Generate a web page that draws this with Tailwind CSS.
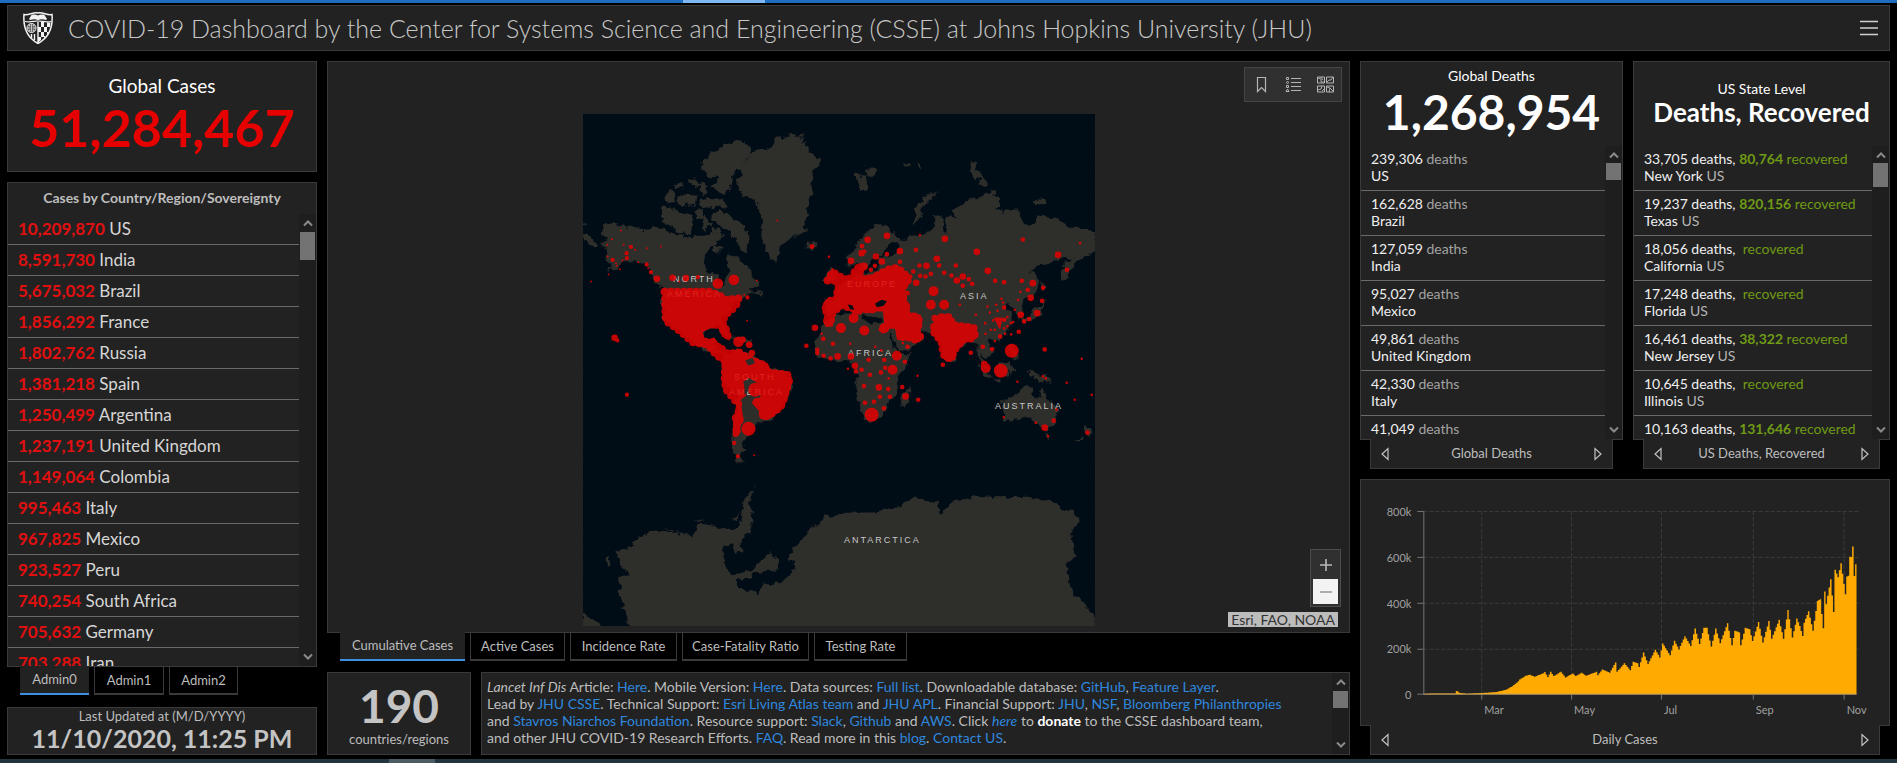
<!DOCTYPE html>
<html lang="en">
<head>
<meta charset="utf-8">
<title>COVID-19 Dashboard</title>
<script src="https://cdn.jsdelivr.net/npm/@tailwindcss/browser@4"></script>
</head>
<body class="flex h-screen min-h-[700px] flex-col overflow-hidden bg-black font-['Lato',sans-serif] text-sm leading-[17px] text-[#bdbdbd]">
<svg class="hidden">
  <symbol id="up" viewBox="0 0 10 8"><path d="M1 6.500 5 2.500l4 4" fill="none" stroke="#8a8a8a" stroke-width="2"/></symbol>
  <symbol id="down" viewBox="0 0 10 8"><path d="M1 1.500l4 4 4-4" fill="none" stroke="#8a8a8a" stroke-width="2"/></symbol>
  <symbol id="prev" viewBox="0 0 8 14"><path d="M7 1.500v11L1 7z" fill="none" stroke="#c4c4c4" stroke-width="1.200"/></symbol>
  <symbol id="next" viewBox="0 0 8 14"><path d="M1 1.500v11L7 7z" fill="none" stroke="#c4c4c4" stroke-width="1.200"/></symbol>
</svg>

<div class="flex h-[3px] shrink-0 bg-[#1f6dbd]"><div class="ml-[36%] w-[82px] bg-[#7db8f5]"></div></div>

<header class="mx-[7px] mt-0.5 flex h-[46px] shrink-0 items-center border border-[#3a3a3a] bg-[#222] px-[15px]">
  <svg class="h-8 w-[30px]" viewBox="0 0 30 32" aria-label="Johns Hopkins University">
    <path d="M1 2.500C6 3.500 10 0 15 1c5-1 9 2.500 14 1.500C30 15 27 25 15 31.500 3 25 0 15 1 2.500z" fill="#222" stroke="#f2f2f2" stroke-width="1.500"/>
    <path d="M6 7l2.500-4c2.500-.6 4.500-.6 6.500.6 2-1.200 4-1.200 6.500-.6L24 7l-1 1c-3-1-6-1-8 .3C13 7 10 7 7 8z" fill="#f2f2f2"/>
    <path d="M2 9.500c5 1 9-.5 13-.5s8 1.500 13 .5" fill="none" stroke="#f2f2f2" stroke-width="1.200"/>
    <circle cx="8.500" cy="16" r="4.500" fill="none" stroke="#f2f2f2"/>
    <path d="M4 16h9M8.500 11.500v9M5.500 13c2 1.500 4 1.500 6 0M5.500 19c2-1.500 4-1.500 6 0M7 12c-1.500 2-1.500 6 0 8M10 12c1.500 2 1.500 6 0 8" fill="none" stroke="#f2f2f2" stroke-width=".7"/>
    <path d="M15 10v21M11.500 22v6M8.500 22v4" stroke="#f2f2f2" stroke-width="1.400"/>
    <path d="M18 10h3v5h-3zM24 10.500h3.500L27 15h-3zM21 15h3v5h-3zM18 20h3v5h-3zM15 15h3v5h-3zM24 20h2l-2 4zM21 24h1.500L21 27zM15 25h3v3l-3 2.500z" fill="#f2f2f2"/>
  </svg>
  <h1 class="ml-[15px] text-[25px] leading-[30px] font-light whitespace-nowrap text-[#c8c8c8]">COVID-19 Dashboard by the Center for Systems Science and Engineering (CSSE) at Johns Hopkins University (JHU)</h1>
  <button class="ml-auto" aria-label="Menu"><svg class="mr-[-4px] h-4 w-[18px]" viewBox="0 0 18 16"><path d="M0 1.500h18M0 8h18M0 14.500h18" stroke="#d0d0d0" stroke-width="1.600"/></svg></button>
</header>

<main class="mx-[7px] mt-[10px] grid min-h-0 flex-1 grid-cols-[310fr_1023fr_530fr] gap-[10px]">
  <!-- Country totals -->
  <section class="flex min-h-0 min-w-0 flex-col">
    <div class="flex h-[111px] shrink-0 flex-col items-center border border-[#3a3a3a] bg-[#222] pt-3">
      <h2 class="text-[19px] leading-6 text-white">Global Cases</h2>
      <p class="text-[52px] leading-[58px] font-bold text-[#e60000]">51,284,467</p>
    </div>
    <div class="mt-[10px] flex min-h-0 flex-1 flex-col border border-[#3a3a3a] bg-[#222]">
      <h2 class="h-[31px] shrink-0 text-center text-[14px] leading-[30px] font-bold">Cases by Country/Region/Sovereignty</h2>
      <div class="flex min-h-0 flex-1">
        <ul class="min-w-0 flex-1 overflow-hidden text-[17px] leading-[30px] text-[#d6d6d6] [&>li]:border-b [&>li]:border-[#6a6a6a] [&>li]:pl-[10px] [&_b]:text-[#e01010]">
          <li><b>10,209,870</b> US</li>
          <li><b>8,591,730</b> India</li>
          <li><b>5,675,032</b> Brazil</li>
          <li><b>1,856,292</b> France</li>
          <li><b>1,802,762</b> Russia</li>
          <li><b>1,381,218</b> Spain</li>
          <li><b>1,250,499</b> Argentina</li>
          <li><b>1,237,191</b> United Kingdom</li>
          <li><b>1,149,064</b> Colombia</li>
          <li><b>995,463</b> Italy</li>
          <li><b>967,825</b> Mexico</li>
          <li><b>923,527</b> Peru</li>
          <li><b>740,254</b> South Africa</li>
          <li><b>705,632</b> Germany</li>
          <li><b>703,288</b> Iran</li>
        </ul>
        <div class="flex w-[17px] flex-col items-center bg-[#1e1e1f]">
          <svg class="my-[5px] h-2 w-[10px] shrink-0"><use href="#up"/></svg>
          <div class="h-7 w-[15px] bg-[#737374]"></div>
          <svg class="mt-auto mb-[5px] h-2 w-[10px]"><use href="#down"/></svg>
        </div>
      </div>
    </div>
    <nav class="flex h-7 shrink-0 gap-[5px] pl-[13px] text-[13px]">
      <button class="relative -mt-px w-[69px] border-b-2 border-[#3d8fdf] bg-[#222]">Admin0</button>
      <button class="w-[70px] border border-t-0 border-b-2 border-[#3a3a3a]">Admin1</button>
      <button class="w-[69px] border border-t-0 border-b-2 border-[#3a3a3a]">Admin2</button>
    </nav>
    <div class="mt-3 flex h-12 shrink-0 flex-col items-center border border-[#3a3a3a] bg-[#222]">
      <p class="text-[13px] leading-4">Last Updated at (M/D/YYYY)</p>
      <p class="text-[25px] leading-[29px] font-bold whitespace-nowrap text-[#c4c4c4]">11/10/2020, 11:25 PM</p>
    </div>
  </section>

  <!-- Map -->
  <section class="flex min-h-0 min-w-0 flex-col">
    <div class="relative flex min-h-0 flex-1 items-end justify-center border border-[#3a3a3a] bg-[#222] pb-[6px]">
      <svg class="size-[512px] bg-[#010e18]" viewBox="0 0 512 512" role="img" aria-label="World map of cumulative cases">
        <defs><filter id="coast" x="0" y="0" width="1" height="1"><feTurbulence type="fractalNoise" baseFrequency=".13" numOctaves="3" seed="4"/><feDisplacementMap in="SourceGraphic" scale="9" xChannelSelector="R" yChannelSelector="G"/></filter></defs>
        <g fill="#2d2d2a" filter="url(#coast)">
          <rect width="512" height="512" fill="#010e18"/>
          <g transform="translate(-7 -4) scale(.333)">
            <path d="M80 348L120 340 150 352 205 358 235 352 270 358 310 375 350 382 400 370 435 362 438 385 425 400 395 425 385 450 390 480 415 490 430 512 442 535 452 505 458 480 450 452 460 434 485 440 500 460 518 462 530 500 550 515 545 532 515 540 535 545 560 540 555 555 530 550 500 565 465 590 440 635 460 690 430 655 385 665 380 690 420 680 415 705 440 725 480 745 400 730 350 700 310 665 265 630 258 580 260 540 240 520 225 490 205 465 180 455 155 455 125 470 95 492 110 470 85 440 100 425 75 405 95 390 78 370z"/>
            <path d="M480 215L497 200 495 175 525 130 545 120 575 120 590 105 600 85 650 75 685 85 690 110 700 130 740 145 720 175 705 205 710 240 700 280 697 320 680 345 690 360 670 375 650 385 620 400 610 420 600 455 585 445 570 420 562 390 555 350 560 325 545 280 520 262 500 260z"/>
            <path d="M385 150L430 110 480 93 525 105 520 135 500 170 470 195 465 225 450 255 430 250 410 235 430 205 395 200 378 165zM410 310L440 300 470 320 500 345 520 380 523 400 515 432 490 420 480 385 450 355 425 345 410 330zM255 295L285 290 310 312 340 310 355 345 345 375 310 368 285 345 255 330zM265 265l20-25 15 10-5 20-25 5zM300 225l20-12v22l-20 2zM340 205l20 2 15 20-30 5zM375 215l20 10-5 30-20-15zM300 270l30-25 35 10-5 30-50 5zM370 262l25 5 50 2 5 20-70 5-10-15zM358 305l20-5v30l-20-5zM385 310l20 30-20 20-10-25zM400 350l30 5 5 15-25 5zM415 405l25 5-5 12-20 10zM692 402l30-5 5 15-20 12-15-8zM20 370l25 10 20 25-15 8-30-25zM20 335l12 6-12 4z"/>
            <path d="M440 745L480 720 530 735 570 765 600 780 645 800 650 830 630 870 610 905 580 930 545 940 520 975 500 1000 505 1025 488 1042 508 1058 480 1055 468 1020 470 960 485 900 480 850 440 820zM470 685l30-5 30 15-20 8z"/>
          </g>
          <g transform="translate(208 -4) scale(.333)">
            <path d="M98 570L130 565 135 535 150 520 190 495 240 490 260 470 270 440 290 435 320 430 330 405 310 395 345 385 380 372 420 370 432 355 430 325 440 315 455 325 458 370 470 370 465 320 490 325 490 300 530 270 570 260 590 238 625 260 625 290 615 305 680 305 695 325 705 345 730 340 740 320 800 325 830 345 870 355 912 365 912 425 880 440 850 465 830 500 815 515 812 480 840 445 860 440 800 450 770 465 745 465 715 490 735 495 745 510 740 540 720 560 695 570 695 625 680 625 672 600 650 585 635 595 660 610 665 640 650 670 625 690 590 690 608 725 585 745 570 730 585 770 600 790 580 775 560 735 560 700 530 690 500 720 490 755 465 755 445 700 420 665 385 660 398 690 350 720 325 725 300 670 275 665 275 620 235 625 200 640 180 590 130 610 110 620z"/>
            <path d="M100 640L140 612 200 610 225 635 290 645 295 680 325 735 362 730 350 765 320 800 315 850 300 870 290 900 265 930 230 935 215 910 200 865 195 835 205 800 185 770 180 755 130 755 100 745 75 725 72 700 85 665zM170 470L170 440 195 420 210 385 235 355 270 345 315 365 322 395 290 400 285 430 255 440 235 455 230 480 210 480 200 460z"/>
            <path d="M635 935L640 910 630 875 660 860 690 840 705 828 725 832 720 855 745 870 752 830 770 860 795 890 800 920 790 945 765 960 740 945 720 925 690 920 665 932zM762 970l14 2-6 12zM885 945l18 12-10 20-8-8zM850 1000l28-20 6 8-22 12zM330 865l25-30v25l-12 30h-12zM368 325l12-40 30-28 28-10-40 40-12 50-15 8zM195 190l30 8 5 40-20 12zM220 175l35 0v20l-25 5zM340 168l20-8v12zM380 160l12 8-8 8zM545 155l12 10-8 25-15-8zM540 185l25-5 8 25-20 5zM570 200l20 20-20 8zM730 268l30-2 5 16-35 2zM708 785l60 10 15 25-35-5-30-18zM610 770l50-20-5 50-40 0zM655 772l20 4-14 25zM555 760l45 35 0 15-20-15zM590 805l45 8-10 5zM650 715l20 40 14-10-15-40zM750 510l12 20-10 10zM690 625l30-10 30-30 15-20-15 50-50 25zM98 510l25-40 18 30-20 20z"/>
          </g>
          <g transform="translate(-7 346) scale(.338 .333)">
            <path d="M115 265L150 270 170 245 210 220 300 215 350 228 355 195 400 195 435 208 475 205 490 190 495 120 515 100 535 82 510 122 520 160 522 200 490 240 492 275 470 278 460 255 432 258 440 310 465 345 520 330 550 300 575 275 598 310 590 335 540 335 500 358 475 360 480 385 525 392 533 410 555 375 610 365 648 330 648 310 625 295 690 210 740 172 800 158 880 158 940 150 1005 105 1030 125 1070 128 1077 165 1120 125 1190 108 1250 112 1340 110 1395 122 1430 138 1495 175 1465 210 1475 290 1452 310 1460 390 1535 465 1550 530H180L145 475 130 400 128 355 162 345 130 315zM20 460l60 38-10 30H20zM85 300l15-5 5 20-10 8zM350 182l25 0-10 6zM460 175l25-15-5 25zM258 208h30v5z"/>
          </g>
        </g>
        <g font-family="Liberation Sans" font-size="9" fill="#c8c8c8" style="letter-spacing:2px">
          <text x="90" y="168">NORTH</text><text x="84" y="183">AMERICA</text>
          <text x="151" y="266">SOUTH</text><text x="146" y="281">AMERICA</text>
          <text x="264" y="173">EUROPE</text><text x="377" y="185">ASIA</text>
          <text x="265" y="242">AFRICA</text><text x="412" y="295">AUSTRALIA</text>
          <text x="261" y="429">ANTARCTICA</text>
        </g>
        <g opacity=".84" fill="#e80000" stroke="#e80000" stroke-linecap="round" stroke-linejoin="round">
          <g transform="translate(-7 -4) scale(.333)">
            <path fill="none" stroke-width="24" stroke-dasharray="0 19" d="M266 546L405 546 435 560 450 570 488 566 480 588 455 610 438 635 450 660 456 680M374 684L390 698 405 697 430 712 455 732 490 728 520 748 568 768 572 786 610 792 634 794 640 812 624 868 614 892 578 918 555 918M480 925L485 950 481 972M478 872L450 838 446 800 450 755 422 736 395 704 352 698 306 658 270 633 268 590 268 548"/>
            <path stroke-width="4" d="M262 540L405 540 435 555 450 566 494 562 486 588 458 610 440 635 455 660 460 690 440 680 430 655 400 655 380 665 378 680 400 690 415 685 430 700 450 724 490 722 520 740 575 762 574 782 610 785 640 788 648 812 632 868 622 895 580 926 555 925 533 882 556 862 552 822 520 802 500 815 510 855 492 870 500 925 490 950 486 978 475 980 474 930 486 872 444 840 442 800 445 755 418 740 390 706 350 700 300 660 266 635z"/>
            <path fill="none" stroke-width="42" d="M518 957h0M628 810h0M570 910h0M460 800h0M556 776h0M460 760h0M600 870h0M285 620h0M395 600h0M538 840h0"/>
            <path fill="none" stroke-width="32" d="M474 510h0M426 521h0M488 696h0M365 690h0M432 730h0M488 930h0M278 595h0M446 660h0M545 880h0"/>
            <path fill="none" stroke-width="20" d="M290 504h0M243 507h0M520 705h0M528 730h0M489 883h0M480 960h0M480 970h0M330 505h0M116 684h0M500 690h0"/>
            <path fill="none" stroke-width="13" d="M366 502h0M165 411h0M152 430h0M153 445h0M486 1040h0M153 855h0M708 410h0M212 464h0M515 563h0M124 692h0M475 1000h0M110 450h0M225 487h0"/>
            <path fill="none" stroke-width="6" d="M108 388h0M135 362h0M143 405h0M94 405h0M95 440h0M123 468h0M140 452h0M178 420h0M213 415h0M255 410h0M187 457h0M605 332h0M760 441h0M543 512h0M514 633h0M45 515h0M535 1037h0M310 515h0M120 460h0M98 494h0M132 478h0M217 475h0M445 690h0M505 555h0"/>
          </g>
          <g transform="translate(208 -4) scale(.333)">
            <path fill="none" stroke-width="24" stroke-dasharray="0 19" d="M110 512L126 486 140 498 175 512 205 470 220 470M260 496L290 480 320 474 342 494 350 512 332 538 340 580 348 616 380 622 386 640 376 660 388 680 375 690 350 682 320 682M245 598L205 598 170 592 150 586 124 610 118 640M106 604L104 595 112 575 138 566 140 530M430 652L450 622 476 622 486 646 548 654 552 676 540 686 516 690 488 724 484 742 470 746 458 734 452 695 430 668"/>
            <path stroke-width="4" d="M104 510L125 476 136 492 175 508 205 462 222 462 214 500 260 492 290 474 320 470 345 490 360 515 336 540 345 580 352 612 388 618 390 640 380 660 395 684 385 695 350 688 320 688 314 655 290 655 275 670 264 660 282 640 278 602 245 603 205 605 195 615 170 596 150 590 128 615 124 648 106 650 98 635 104 610 94 595 104 572 132 566 134 525zM424 648L444 618 480 614 490 642 552 648 560 680 545 692 520 696 492 728 492 748 470 754 454 738 448 695 424 668zM612 625l20 0-5 30z"/>
            <path fill="none" stroke-width="42" d="M663 723h0M630 783h0M242 915h0M374 632h0M295 596h0M338 670h0M475 735h0M115 595h0M460 640h0M205 520h0"/>
            <path fill="none" stroke-width="30" d="M428 544h0M318 738h0M305 780h0M220 662h0M150 655h0M420 585h0M460 585h0M188 625h0M585 775h0M343 590h0M195 570h0M538 665h0M280 655h0"/>
            <path fill="none" stroke-width="20" d="M462 387h0M558 426h0M438 447h0M407 468h0M591 483h0M726 520h0M327 424h0M288 378h0M376 519h0M720 564h0M72 654h0M264 833h0M180 740h0M192 768h0M140 740h0M344 860h0M739 610h0M762 954h0M498 512h0M516 500h0M273 455h0M255 440h0M230 390h0M180 453h0M432 625h0M580 763h0M212 430h0M802 435h0M690 615h0M238 600h0M205 605h0M190 485h0"/>
            <path fill="none" stroke-width="14" d="M64 410h0M696 389h0M375 420h0M213 409h0M288 433h0M495 467h0M445 467h0M460 489h0M482 497h0M534 508h0M544 522h0M516 528h0M613 513h0M640 517h0M693 513h0M829 480h0M757 534h0M711 540h0M754 573h0M420 492h0M404 500h0M386 467h0M388 498h0M367 485h0M350 550h0M46 708h0M97 687h0M126 702h0M79 720h0M79 730h0M98 738h0M119 746h0M350 711h0M237 795h0M219 829h0M212 780h0M233 750h0M280 750h0M270 788h0M283 774h0M292 838h0M267 861h0M297 861h0M222 879h0M249 876h0M279 896h0M334 832h0M382 870h0M540 729h0M456 765h0M762 719h0M789 933h0M684 666h0M628 680h0M576 711h0M604 718h0M327 456h0M700 635h0M715 628h0M640 593h0M342 756h0M890 969h0M625 640h0M358 500h0M195 785h0M220 425h0M640 630h0M252 468h0M240 480h0"/>
            <path fill="none" stroke-width="8" d="M114 441h0M868 400h0M387 376h0M583 641h0M600 660h0M597 608h0M620 603h0M637 578h0M672 600h0M689 546h0M682 570h0M584 672h0M607 632h0M650 622h0M660 640h0M640 656h0M650 650h0M612 660h0M555 615h0M507 585h0M178 702h0M253 711h0M271 722h0M293 806h0M171 777h0M380 798h0M873 747h0M828 819h0M852 870h0M903 855h0M680 816h0M735 939h0M639 923h0M756 800h0M765 806h0M797 900h0M661 674h0M643 672h0M612 694h0M590 590h0M632 567h0M616 585h0M667 637h0M92 672h0M336 700h0M772 980h0"/>
          </g>
        </g>
        <!-- Inland seas and uncovered land inside the dense clusters -->
        <g transform="translate(-7 -4) scale(.333)">
          <path fill="#2d2d2a" d="M502 872L530 866 528 880 550 905 546 928 520 934 502 900zM506 815l10 3 2 26-12 12zM508 752l22-8 8 16-20 8z"/>
          <path fill="#010e18" d="M384 668l20-12 22 2 10 20 14 12 0 12-22-2-14-18-28 2z"/>
        </g>
        <g transform="translate(208 -4) scale(.333)" fill="#010e18">
          <path d="M252 582l20-12 16 4-10 14-20 4zM170 584l14 2 6 14-12-2zM214 612l16 8 30 2 0 12-30 0-18-8z"/>
        </g>
      </svg>
      <div class="absolute top-[5px] right-[7px] flex h-[35px] w-[98px] items-center justify-around border border-[#454545] bg-[#303030]">
        <button aria-label="Bookmarks"><svg class="size-[17px]" viewBox="0 0 17 17"><path d="M4.500 1.500h8v14l-4-4-4 4z" fill="none" stroke="#b4b4b4" stroke-width="1.200"/></svg></button>
        <button aria-label="Legend"><svg class="size-[17px]" viewBox="0 0 17 17"><path d="M6 2.500h10M6 6.500h10M6 10.500h10M6 14.500h10" stroke="#b4b4b4" stroke-width="1.200"/><path d="M1.500 1.500h2v2h-2zM1.500 9.500h2v2h-2zM1 15.500l1.500-2.500L4 15.500z" fill="none" stroke="#b4b4b4"/><circle cx="2.500" cy="6.500" r="1" fill="none" stroke="#b4b4b4"/></svg></button>
        <button aria-label="Basemap gallery"><svg class="size-[17px]" viewBox="0 0 17 17"><path d="M.5 1h7v6h-7zM9.500 1h7v6h-7zM.5 10h7v6h-7zM9.500 10h7v6h-7z" fill="none" stroke="#b4b4b4"/><path d="M1 2l3 1v3h3M4 1l2 3M10 6l2-2h2l2-3M1 14l3-1 1-3M5 15l2-2M10 11l3 1-1 4M13 12l3 3" fill="none" stroke="#b4b4b4" stroke-width=".9"/></svg></button>
      </div>
      <div class="absolute right-2 bottom-[25px] flex h-[58px] w-[31px] flex-col items-center border border-[#4c4c4c] bg-[#303030]">
        <button class="flex h-[29px] items-center" aria-label="Zoom in"><svg class="size-3" viewBox="0 0 12 12"><path d="M0 6h12M6 0v12" stroke="#b8b8b8" stroke-width="1.600"/></svg></button>
        <button class="flex h-[25px] w-[25px] items-center justify-center bg-[#f3f3f3]" aria-label="Zoom out"><svg class="size-3" viewBox="0 0 12 12"><path d="M0 6h12" stroke="#a5a5a5" stroke-width="1.800"/></svg></button>
      </div>
      <div class="absolute right-[11px] bottom-[5px] bg-[#bcbcbc] px-[3px] text-[14px] leading-[15px] text-[#323232]">Esri, FAO, NOAA</div>
    </div>
    <nav class="flex h-7 shrink-0 gap-[5px] pl-[13px] text-[13px] whitespace-nowrap">
      <button class="relative -mt-px w-[125px] border-b-2 border-[#3d8fdf] bg-[#222]">Cumulative Cases</button>
      <button class="w-[95px] border border-t-0 border-b-2 border-[#3a3a3a]">Active Cases</button>
      <button class="w-[107px] border border-t-0 border-b-2 border-[#3a3a3a]">Incidence Rate</button>
      <button class="w-[127px] border border-t-0 border-b-2 border-[#3a3a3a]">Case-Fatality Ratio</button>
      <button class="w-[93px] border border-t-0 border-b-2 border-[#3a3a3a]">Testing Rate</button>
    </nav>
    <div class="mt-[11px] flex h-[83px] shrink-0 gap-[10px]">
      <div class="flex w-[144px] shrink-0 flex-col items-center border border-[#3a3a3a] bg-[#222] pt-2">
        <p class="text-[46px] leading-[50px] font-bold text-[#c4c4c4]">190</p>
        <p class="text-[13px]">countries/regions</p>
      </div>
      <div class="flex min-w-0 flex-1 border border-[#3a3a3a] bg-[#222]">
        <p class="min-w-0 flex-1 overflow-hidden pt-[5px] pl-[5px] text-[14px] whitespace-nowrap [&_a]:text-[#2f87de]"><i>Lancet Inf Dis</i> Article: <a href="#">Here</a>. Mobile Version: <a href="#">Here</a>. Data sources: <a href="#">Full list</a>. Downloadable database: <a href="#">GitHub</a>, <a href="#">Feature Layer</a>.<br>Lead by <a href="#">JHU CSSE</a>. Technical Support: <a href="#">Esri Living Atlas team</a> and <a href="#">JHU APL</a>. Financial Support: <a href="#">JHU</a>, <a href="#">NSF</a>, <a href="#">Bloomberg Philanthropies</a><br>and <a href="#">Stavros Niarchos Foundation</a>. Resource support: <a href="#">Slack</a>, <a href="#">Github</a> and <a href="#">AWS</a>. Click <a href="#"><i>here</i></a> to <b class="text-white">donate</b> to the CSSE dashboard team,<br>and other JHU COVID-19 Research Efforts. <a href="#">FAQ</a>. Read more in this <a href="#">blog</a>. <a href="#">Contact US</a>.</p>
        <div class="flex w-[17px] flex-col items-center bg-[#1e1e1f]">
          <svg class="my-[5px] h-2 w-[10px] shrink-0"><use href="#up"/></svg>
          <div class="h-[17px] w-[15px] bg-[#737374]"></div>
          <svg class="mt-auto mb-[5px] h-2 w-[10px]"><use href="#down"/></svg>
        </div>
      </div>
    </div>
  </section>

  <!-- Deaths, recovered and daily chart -->
  <section class="flex min-h-0 min-w-0 flex-col gap-[10px]">
    <div class="grid min-h-0 flex-[409] grid-cols-[263fr_257fr] gap-[10px]">
      <div class="flex min-h-0 min-w-0 flex-col">
        <div class="flex min-h-0 flex-1 flex-col border border-[#3a3a3a] bg-[#222]">
          <div class="flex h-[84px] shrink-0 flex-col items-center pt-[5px] text-white">
            <h2 class="text-[14px]">Global Deaths</h2>
            <p class="text-[48px] leading-[56px] font-bold">1,268,954</p>
          </div>
          <div class="flex min-h-0 flex-1">
            <ul class="min-w-0 flex-1 overflow-hidden text-[14px] text-[#efefef] [&>li]:h-[45px] [&>li]:border-b [&>li]:border-[#6a6a6a] [&>li]:pt-1 [&>li]:pl-[10px] [&_span]:text-[#a3a3a3]">
              <li>239,306 <span>deaths</span><br>US</li>
              <li>162,628 <span>deaths</span><br>Brazil</li>
              <li>127,059 <span>deaths</span><br>India</li>
              <li>95,027 <span>deaths</span><br>Mexico</li>
              <li>49,861 <span>deaths</span><br>United Kingdom</li>
              <li>42,330 <span>deaths</span><br>Italy</li>
              <li>41,049 <span>deaths</span></li>
            </ul>
            <div class="flex w-[17px] flex-col items-center bg-[#1e1e1f]">
              <svg class="mt-[5px] mb-1 h-2 w-[10px] shrink-0"><use href="#up"/></svg>
              <div class="h-[17px] w-[15px] bg-[#737374]"></div>
              <svg class="mt-auto mb-[5px] h-2 w-[10px]"><use href="#down"/></svg>
            </div>
          </div>
        </div>
        <div class="relative mx-[10px] -mt-px flex h-[30px] shrink-0 items-center justify-between border border-t-0 border-[#3a3a3a] bg-[#222] px-[10px] text-[13px]">
          <button aria-label="Previous"><svg class="h-[14px] w-2"><use href="#prev"/></svg></button><span>Global Deaths</span><button aria-label="Next"><svg class="h-[14px] w-2"><use href="#next"/></svg></button>
        </div>
      </div>
      <div class="flex min-h-0 min-w-0 flex-col">
        <div class="flex min-h-0 flex-1 flex-col border border-[#3a3a3a] bg-[#222]">
          <div class="flex h-[84px] shrink-0 flex-col items-center pt-[18px] text-white">
            <h2 class="text-[14px]">US State Level</h2>
            <p class="text-[26px] leading-[30px] font-bold whitespace-nowrap">Deaths, Recovered</p>
          </div>
          <div class="flex min-h-0 flex-1">
            <ul class="min-w-0 flex-1 overflow-hidden text-[14px] whitespace-nowrap text-[#efefef] [&>li]:h-[45px] [&>li]:border-b [&>li]:border-[#6a6a6a] [&>li]:pt-1 [&>li]:pl-[10px] [&_em]:text-[#6f9a15] [&_em]:not-italic [&_span]:text-[#b5b5b5]">
              <li>33,705 deaths, <em><b>80,764</b> recovered</em><br>New York <span>US</span></li>
              <li>19,237 deaths, <em><b>820,156</b> recovered</em><br>Texas <span>US</span></li>
              <li>18,056 deaths, &nbsp;<em>recovered</em><br>California <span>US</span></li>
              <li>17,248 deaths, &nbsp;<em>recovered</em><br>Florida <span>US</span></li>
              <li>16,461 deaths, <em><b>38,322</b> recovered</em><br>New Jersey <span>US</span></li>
              <li>10,645 deaths, &nbsp;<em>recovered</em><br>Illinois <span>US</span></li>
              <li>10,163 deaths, <em><b>131,646</b> recovered</em></li>
            </ul>
            <div class="flex w-[17px] flex-col items-center bg-[#1e1e1f]">
              <svg class="mt-[5px] mb-1 h-2 w-[10px] shrink-0"><use href="#up"/></svg>
              <div class="h-6 w-[15px] bg-[#737374]"></div>
              <svg class="mt-auto mb-[5px] h-2 w-[10px]"><use href="#down"/></svg>
            </div>
          </div>
        </div>
        <div class="relative mx-[10px] -mt-px flex h-[30px] shrink-0 items-center justify-between border border-t-0 border-[#3a3a3a] bg-[#222] px-[10px] text-[13px]">
          <button aria-label="Previous"><svg class="h-[14px] w-2"><use href="#prev"/></svg></button><span>US Deaths, Recovered</span><button aria-label="Next"><svg class="h-[14px] w-2"><use href="#next"/></svg></button>
        </div>
      </div>
    </div>
    <div class="flex min-h-0 flex-[276] flex-col">
      <div class="min-h-0 flex-1 border border-[#3a3a3a] bg-[#222]">
        <svg class="size-full" viewBox="0 0 528 245" role="img" aria-label="Daily cases">
          <path d="M62 31.500H500M62 77.500H500M62 123.500H500M62 169.500H500M120.500 31V215M210.500 31V215M300.500 31V215M392.500 31V215M483.500 31V215" stroke="#3c3c3c" stroke-dasharray="4 2" fill="none"/>
          <path id="bars" fill="#ffaa00"/>
          <path d="M56 31.500h6.500V215M56 77.500h6M56 123.500h6M56 169.500h6M56 214.500h6" stroke="#757575" fill="none"/>
          <path d="M62 214.500H496" stroke="#b9a070"/>
          <path d="M120.500 215v5M210.500 215v5M300.500 215v5M392.500 215v5M483.500 215v5" stroke="#757575"/>
          <g font-size="11" fill="#a0a0a0" text-anchor="end"><text x="50" y="36">800k</text><text x="50" y="82">600k</text><text x="50" y="128">400k</text><text x="50" y="173">200k</text><text x="50" y="219">0</text></g>
          <g font-size="11" fill="#a0a0a0"><text x="123" y="234">Mar</text><text x="213" y="234">May</text><text x="303" y="234">Jul</text><text x="395" y="234">Sep</text><text x="486" y="234">Nov</text></g>
        </svg>
      </div>
      <div class="relative mx-[10px] -mt-px flex h-[30px] shrink-0 items-center justify-between border border-t-0 border-[#3a3a3a] bg-[#222] px-[10px] text-[13px]">
        <button aria-label="Previous"><svg class="h-[14px] w-2"><use href="#prev"/></svg></button><span>Daily Cases</span><button aria-label="Next"><svg class="h-[14px] w-2"><use href="#next"/></svg></button>
      </div>
    </div>
  </section>
</main>
<div class="mt-1 flex h-1 shrink-0 bg-[#22343f]"><div class="ml-[389px] w-[46px] bg-[#4b5c62]"></div></div>

<script>
// Outline of daily new cases: [day, thousands]
const outline = [[0,1],[5,3],[12,3],[21,3],[22,14],[23,12],[24,6],[29,2],[39,5],[49,9],[56,20],[60,35],[63,50],[65,64],[69,80],[72,85],[75,76],[81,92],[82,97],[84,75],[86,98],[88,79],[93,98],[96,73],[101,91],[103,79],[107,94],[110,80],[117,98],[118,83],[121,108],[124,100],[126,94],[130,138],[131,98],[136,135],[140,105],[142,142],[145,135],[146,119],[149,182],[152,132],[157,194],[160,161],[162,222],[167,170],[170,234],[173,196],[177,254],[181,211],[184,287],[187,220],[190,291],[192,290],[195,208],[198,287],[201,223],[206,310],[209,214],[211,278],[214,270],[215,214],[218,290],[221,284],[223,233],[227,316],[230,226],[234,320],[236,243],[241,325],[244,243],[247,368],[250,248],[253,331],[255,298],[257,255],[258,313],[261,363],[264,277],[267,408],[269,415],[271,288],[272,449],[273,394],[276,503],[278,360],[279,544],[281,512],[283,573],[286,437],[287,515],[288,518],[289,602],[290,600],[291,646],[292,517],[293,568],[294,498]];
let d = "M62 214.500", k = 0;
for (let day = 0; day < 294; day++) {
  while (outline[k + 1][0] < day) k++;
  const [a, va] = outline[k], [b, vb] = outline[k + 1];
  const v = va + (vb - va) * (day - a) / (b - a);
  d += "V" + (214.5 - v * 0.2288).toFixed(1) + "H" + (62 + (day + 1) * 1.476).toFixed(1);
}
document.getElementById("bars").setAttribute("d", d + "V214.500Z");
</script>
</body>
</html>
